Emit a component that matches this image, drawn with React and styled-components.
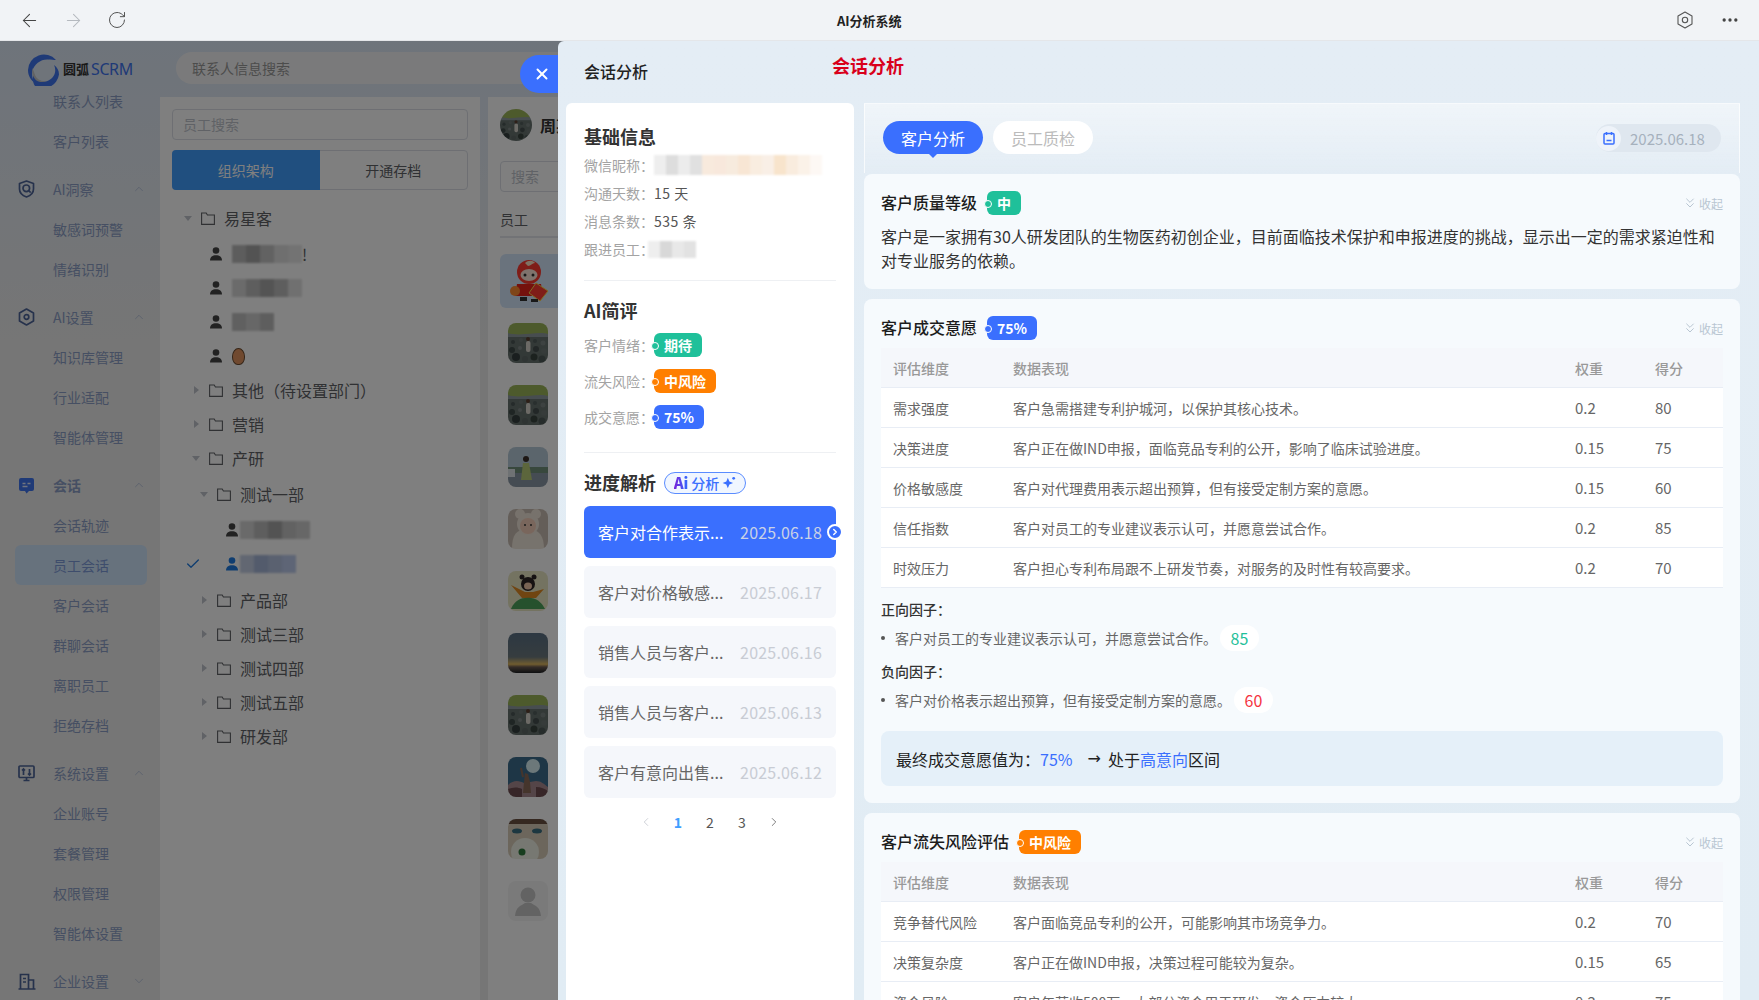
import React from 'react';
import styled, { createGlobalStyle } from 'styled-components';
import { ArrowLeft, ArrowRight, RotateCw, MoreHorizontal, X, ChevronUp, ChevronDown, ChevronLeft, ChevronRight, ChevronsDown, Check } from 'lucide-react';

const GlobalStyle = createGlobalStyle`
    html, body { margin: 0; padding: 0; height: 100%; overflow: hidden; }
    body { font-family: "Noto Sans CJK SC", "Noto Sans", sans-serif; font-size: 14px; color: #333; }
    * { box-sizing: border-box; }
`;

const GREEN = '#1fc09a';
const ORANGE = '#ff7f00';
const BLUE = '#3a6ffe';

const navGroups = [
    { items: ['联系人列表', '客户列表'] },
    { title: 'AI洞察', icon: 'insight', items: ['敏感词预警', '情绪识别'] },
    { title: 'AI设置', icon: 'setting', items: ['知识库管理', '行业适配', '智能体管理'] },
    { title: '会话', icon: 'chat', strong: true, items: ['会话轨迹', '员工会话', '客户会话', '群聊会话', '离职员工', '拒绝存档'] },
    { title: '系统设置', icon: 'monitor', items: ['企业账号', '套餐管理', '权限管理', '智能体设置'] },
    { title: '企业设置', icon: 'building', closed: true, items: [] },
];

const treeRows = [
    { type: 'folder', pad: 23, open: true, label: '易星客' },
    { type: 'person', pad: 50, mt: 2, label: 'J', tail: '!', cells: ['#bbb', '#a6a6a6', '#c4c4c4', '#dedede', '#e6e6e6'] },
    { type: 'person', pad: 50, cells: ['#d6d6d6', '#bdbdbd', '#a8a8a8', '#bdbdbd', '#e0e0e0'] },
    { type: 'person', pad: 50, cells: ['#c0c0c0', '#cfcfcf', '#bdbdbd'] },
    { type: 'person', pad: 50, nut: true },
    { type: 'folder', pad: 31, label: '其他（待设置部门）' },
    { type: 'folder', pad: 31, label: '营销' },
    { type: 'folder', pad: 31, open: true, label: '产研' },
    { type: 'folder', pad: 39, mt: 2, open: true, label: '测试一部' },
    { type: 'person', pad: 66, mt: 2, tight: true, cells: ['#d4d4d4', '#bdbdbd', '#a6a6a6', '#c4c4c4', '#cfcfcf'] },
    { type: 'person', pad: 25, selected: true, tight: true, cells: ['#c4cfe4', '#a6b6d8', '#b4c2e0', '#bccaec'] },
    { type: 'folder', pad: 39, mt: 2, label: '产品部' },
    { type: 'folder', pad: 39, label: '测试三部' },
    { type: 'folder', pad: 39, label: '测试四部' },
    { type: 'folder', pad: 39, label: '测试五部' },
    { type: 'folder', pad: 39, label: '研发部' },
];

const avatars = ['rocks', 'rocks', 'lake', 'baby', 'toon', 'dusk', 'rocks', 'sun', 'eyes', 'blank'];

const rockDots = [
    [5, 19, 2, '#4a5654'], [13, 17, 2, '#707a78'], [27, 18, 2, '#525e5c'], [35, 20, 2.5, '#7a8482'],
    [4, 27, 3, '#3e4a48'], [12, 25, 2, '#808a88'], [28, 26, 3, '#454f4e'], [36, 28, 3, '#6c7674'],
    [8, 34, 4, '#343f3e'], [17, 36, 3, '#5e6866'], [26, 34, 3.5, '#39443f'], [34, 36, 3.5, '#4c5856'],
];

const progress = [
    { text: '客户对合作表示...', date: '2025.06.18', active: true },
    { text: '客户对价格敏感...', date: '2025.06.17' },
    { text: '销售人员与客户...', date: '2025.06.16' },
    { text: '销售人员与客户...', date: '2025.06.13' },
    { text: '客户有意向出售...', date: '2025.06.12' },
];

const intentRows = [
    ['需求强度', '客户急需搭建专利护城河，以保护其核心技术。', '0.2', '80'],
    ['决策进度', '客户正在做IND申报，面临竞品专利的公开，影响了临床试验进度。', '0.15', '75'],
    ['价格敏感度', '客户对代理费用表示超出预算，但有接受定制方案的意愿。', '0.15', '60'],
    ['信任指数', '客户对员工的专业建议表示认可，并愿意尝试合作。', '0.2', '85'],
    ['时效压力', '客户担心专利布局跟不上研发节奏，对服务的及时性有较高要求。', '0.2', '70'],
];

const riskRows = [
    ['竞争替代风险', '客户面临竞品专利的公开，可能影响其市场竞争力。', '0.2', '70'],
    ['决策复杂度', '客户正在做IND申报，决策过程可能较为复杂。', '0.15', '65'],
    ['资金风险', '客户年营收500万，大部分资金用于研发，资金压力较大。', '0.2', '75'],
];

function NavIcon({ name }) {
    if (name === 'insight') return (
        <svg width="17" height="18" viewBox="0 0 17 18" fill="none" stroke="#4d6498" strokeWidth="1.7">
            <path d="M8.5 1 15.500 3.500V9c0 4-3 6.700-7 8-4-1.300-7-4-7-8V3.500Z" strokeLinejoin="round" />
            <circle cx="8.300" cy="8.300" r="3.300" />
            <path d="m10.700 10.700 2 2" />
        </svg>
    );
    if (name === 'setting') return (
        <svg width="17" height="18" viewBox="0 0 17 18" fill="none" stroke="#4d6498" strokeWidth="1.700">
            <path d="M8.500 1 15.500 5V13L8.500 17 1.500 13V5Z" strokeLinejoin="round" />
            <circle cx="8.500" cy="9" r="2.300" />
        </svg>
    );
    if (name === 'chat') return (
        <svg width="17" height="17" viewBox="0 0 17 17">
            <path d="M3 1h11a2 2 0 0 1 2 2v9a2 2 0 0 1-2 2h-3l-2.500 2.500L7 14H3a2 2 0 0 1-2-2V3a2 2 0 0 1 2-2Z" fill="#3f74ee" />
            <path d="M4.500 6.500h3M9.500 6.500h3M4.500 9.500h5" stroke="#dfe8ff" strokeWidth="1.400" />
        </svg>
    );
    if (name === 'monitor') return (
        <svg width="17" height="17" viewBox="0 0 17 17" fill="none" stroke="#4d6498" strokeWidth="1.700">
            <rect x="1" y="1" width="15" height="11.500" rx="1" />
            <path d="M5.500 15.500h6M8.500 12.500v3M5.500 4v6M11.500 4v6M4 5.500l1.500-1.500L7 5.500M10 8.500l1.500 1.500L13 8.500" />
        </svg>
    );
    return (
        <svg width="18" height="17" viewBox="0 0 18 17" fill="none" stroke="#4d6498" strokeWidth="1.700">
            <path d="M2.500 15.500V1.500h8v14M10.500 7h5v8.500M.5 16h17M5 5.500h3M5 9h3" />
        </svg>
    );
}

function Logo() {
    return (
        <svg width="32" height="33" viewBox="0 0 32 33">
            <path d="M29 7A16 16 0 0 0 1 17c0 6 3 10.500 7 13-2.500-3-3.500-8-2.500-12C7 11 14 6 21 6.500c3 .2 6 .5 8 .5Z" fill="#3f74ee" />
            <path d="M6 21c2 5 7 8 12 7.500 5-.5 9-4.500 10-9 .5-3 .2-5-1-7.500 3 2 5 5.500 5 9.500a16 16 0 0 1-24 11.500C5.500 30 6 26 6 21Z" fill="#3f74ee" />
            <path d="M5.500 15c-1 6 1 10 4 12.500 3.500 2 7 2 10 .5-6 .5-10-2-11.500-6-.8-2.300-1.500-4.500-2.500-7Z" fill="#c6c6c6" />
        </svg>
    );
}

function Folder() {
    return (
        <svg width="14" height="13" viewBox="0 0 14 13" fill="none" stroke="#606266" strokeWidth="1.100">
            <path d="M.6 1h4.600l1.200 2h7v9.400H.6Z" />
        </svg>
    );
}

function Person({ color }) {
    return (
        <svg width="12" height="14" viewBox="0 0 12 14" fill={color}>
            <circle cx="6" cy="3.500" r="3.300" />
            <path d="M0 13.500c0-3.500 2.500-5.300 6-5.300s6 1.800 6 5.300Z" />
        </svg>
    );
}

function Mosaic({ cells, size = 14, height = 18 }) {
    return (
        <svg width={cells.length * size} height={height} style={{ filter: 'blur(1px)' }}>
            {cells.map((c, i) => <rect key={i} x={i * size} y="0" width={size} height={height} fill={c} />)}
        </svg>
    );
}

function Mascot() {
    return (
        <svg width="44" height="44" viewBox="0 0 44 44">
            <circle cx="21" cy="13" r="12" fill="#ff3b30" />
            <path d="M17 4c3-3 8-3 10 0-3 0-4 3-7 3Z" fill="#ffe6c8" />
            <ellipse cx="21" cy="16" rx="8.500" ry="6" fill="#ffe6d8" />
            <circle cx="17" cy="16" r="1.500" fill="#333" />
            <circle cx="25" cy="16" r="1.500" fill="#333" />
            <path d="M9 25h24l2 12H7Z" fill="#e8231a" />
            <path d="M28 24l12 8-8 10-11-8Z" fill="#ff3b30" stroke="#ffd84a" strokeWidth="1" />
            <circle cx="7" cy="32" r="5" fill="#ff8a30" />
            <rect x="12" y="38" width="7" height="4" fill="#333" />
            <rect x="23" y="40" width="7" height="3" fill="#333" />
        </svg>
    );
}

function Scene({ kind }) {
    if (kind === 'rocks') return (
        <svg viewBox="0 0 40 40" width="40" height="40">
            <rect width="40" height="40" fill="#8f9a9e" />
            <path d="M0 0h40v11C30 8 12 14 0 10Z" fill="#9bb458" />
            <path d="M0 14h40v26H0Z" fill="#67726f" />
            {rockDots.map(([x, y, r, c], i) => <circle key={i} cx={x} cy={y} r={r} fill={c} />)}
            <rect x="18" y="18" width="4.500" height="11" rx="2" fill="#d8d4cc" />
            <circle cx="20" cy="16" r="2" fill="#5a3f30" />
        </svg>
    );
    if (kind === 'lake') return (
        <svg viewBox="0 0 40 40" width="40" height="40">
            <rect width="40" height="40" fill="#b7cbd8" />
            <rect y="20" width="40" height="6" fill="#70907a" />
            <rect y="26" width="40" height="14" fill="#8a98a6" />
            <rect x="0" y="22" width="7" height="8" fill="#dfe4e8" />
            <path d="M15 16h6l3 17H13Z" fill="#b9cc78" />
            <circle cx="18" cy="12" r="3" fill="#3a2e28" />
        </svg>
    );
    if (kind === 'baby') return (
        <svg viewBox="0 0 40 40" width="40" height="40">
            <rect width="40" height="40" fill="#c9bdb2" />
            <circle cx="12" cy="5" r="5" fill="#efe4d8" />
            <circle cx="28" cy="5" r="5" fill="#efe4d8" />
            <path d="M4 40c0-14 4-20 16-20s16 8 16 20Z" fill="#efe6da" />
            <circle cx="20" cy="15" r="11" fill="#efe4d8" />
            <circle cx="20" cy="17" r="8" fill="#f3cdb8" />
            <circle cx="17" cy="16" r="1" fill="#333" />
            <circle cx="23" cy="16" r="1" fill="#333" />
        </svg>
    );
    if (kind === 'toon') return (
        <svg viewBox="0 0 40 40" width="40" height="40">
            <rect width="40" height="40" fill="#e9e6c3" />
            <path d="M3 14l14 7h8l11-3-8 9H14Z" fill="#e08a22" />
            <path d="M3 38c4-10 12-12 20-11s12 7 14 11Z" fill="#4ca35a" />
            <circle cx="20" cy="13" r="7" fill="#2c2424" />
            <circle cx="14" cy="6" r="2.500" fill="#2c2424" />
            <circle cx="26" cy="6" r="2.500" fill="#2c2424" />
            <ellipse cx="20" cy="15" rx="4" ry="3.500" fill="#f2c9a8" />
        </svg>
    );
    if (kind === 'dusk') return (
        <svg viewBox="0 0 40 40" width="40" height="40">
            <defs>
                <linearGradient id="duskSky" x1="0" y1="0" x2="0" y2="1">
                    <stop offset="0" stopColor="#5a7084" />
                    <stop offset=".6" stopColor="#6d7a7f" />
                    <stop offset=".78" stopColor="#e0b860" />
                    <stop offset=".85" stopColor="#6b5a50" />
                    <stop offset="1" stopColor="#1c2024" />
                </linearGradient>
            </defs>
            <rect width="40" height="40" fill="url(#duskSky)" />
        </svg>
    );
    if (kind === 'sun') return (
        <svg viewBox="0 0 40 40" width="40" height="40">
            <rect width="40" height="40" fill="#3d6d8c" />
            <circle cx="25" cy="9" r="7" fill="#d8f0f4" />
            <path d="M0 28c6-6 12-4 16-2l12-2c5 0 8 3 12 6v10H0Z" fill="#a88a90" />
            <path d="M0 32c5-2 10-2 14 0v8H0ZM28 30c5 0 9 2 12 4v6H28Z" fill="#6e4c50" />
            <path d="M17 16l3 1 2 8 1 11h-8l1-11Z" fill="#8a6a58" />
            <path d="M15 20l-2-9" stroke="#8a6a58" strokeWidth="2" />
        </svg>
    );
    if (kind === 'eyes') return (
        <svg viewBox="0 0 40 40" width="40" height="40">
            <rect width="40" height="40" fill="#d8cdb8" />
            <path d="M0 0h40v5H0Z" fill="#6a5040" />
            <ellipse cx="9" cy="12" rx="5" ry="2.500" fill="#3a6e80" />
            <ellipse cx="29" cy="12" rx="5" ry="2.500" fill="#3a6e80" />
            <circle cx="17" cy="33" r="14" fill="#eef0e4" />
            <circle cx="14" cy="33" r="3.500" fill="#2e7a3c" />
        </svg>
    );
    return (
        <svg viewBox="0 0 40 40" width="40" height="40">
            <rect width="40" height="40" fill="#f5f5f5" />
            <circle cx="20" cy="14" r="7.500" fill="#c6c6c6" />
            <path d="M7 35c1-10 6-10 10-13h6c4 3 9 3 10 13Z" fill="#c6c6c6" />
        </svg>
    );
}

function DataTable({ rows }) {
    return (
        <Table>
            <HeadRow>
                <span>评估维度</span><span>数据表现</span><span>权重</span><span>得分</span>
            </HeadRow>
            {rows.map((r) => (
                <BodyRow key={r[0]}>
                    {r.map((c, i) => <span key={i}>{c}</span>)}
                </BodyRow>
            ))}
        </Table>
    );
}

function CardHead({ title, color, tag }) {
    return (
        <CardTop>
            <CardTitle>{title}</CardTitle>
            <Tag $color={color}>{tag}</Tag>
            <Collapse><ChevronsDown size={16} strokeWidth={1.5} />收起</Collapse>
        </CardTop>
    );
}

export default function App() {
    return (
        <Page>
            <GlobalStyle />
            <TopBar>
                <NavButtons>
                    <ArrowLeft size={21} strokeWidth={1.2} color="#444" />
                    <ArrowRight size={21} strokeWidth={1.2} color="#b5b9bf" />
                    <RotateCw size={20} strokeWidth={1.2} color="#555" />
                </NavButtons>
                <AppTitle>AI分析系统</AppTitle>
                <TopActions>
                    <svg width="18" height="18" viewBox="0 0 18 18" fill="none" stroke="#555" strokeWidth="1.100">
                        <path d="M9 1 16 5v8l-7 4-7-4V5Z" strokeLinejoin="round" />
                        <circle cx="9" cy="9" r="2.700" />
                    </svg>
                    <MoreHorizontal size={20} strokeWidth={2} color="#444" />
                </TopActions>
            </TopBar>
            <Workspace>
                <Sidebar>
                    <LogoRow>
                        <Logo />
                        <LogoCn>圆弧</LogoCn>
                        <LogoEn>SCRM</LogoEn>
                    </LogoRow>
                    {navGroups.map((g, idx) => (
                        <NavGroup key={idx}>
                            {g.title && (
                                <NavHead>
                                    <NavIconBox><NavIcon name={g.icon} /></NavIconBox>
                                    <NavHeadText $strong={g.strong}>{g.title}</NavHeadText>
                                    {g.closed ? <ChevronDown size={14} strokeWidth={1.2} /> : <ChevronUp size={14} strokeWidth={1.2} />}
                                </NavHead>
                            )}
                            {g.items.map((item) => (
                                <NavItem key={item} $active={item === '员工会话'}>{item}</NavItem>
                            ))}
                        </NavGroup>
                    ))}
                </Sidebar>
                <MainArea>
                    <HeaderRow>
                        <SearchPill>联系人信息搜索<SearchDot /></SearchPill>
                    </HeaderRow>
                    <Panels>
                        <TreePanel>
                            <TextInput $w="296px">员工搜索</TextInput>
                            <SegTabs>
                                <SegTab $active>组织架构</SegTab>
                                <SegTab>开通存档</SegTab>
                            </SegTabs>
                            <Tree>
                                {treeRows.map((r, i) => (
                                    <TreeRow key={i} $pad={r.pad} $mt={r.mt}>
                                        {r.type === 'folder' ? (
                                            <>
                                                <Caret $open={r.open} />
                                                <Folder />
                                                <TreeLabel>{r.label}</TreeLabel>
                                            </>
                                        ) : (
                                            <>
                                                {r.selected && <CheckSlot><Check size={16} strokeWidth={2} color="#1f7be0" /></CheckSlot>}
                                                <Person color={r.selected ? '#1f7be0' : '#444'} />
                                                <PersonName $tight={r.tight}>
                                                    {r.nut ? <Nut /> : <Mosaic cells={r.cells} size={14} height={18} />}
                                                    {r.tail}
                                                </PersonName>
                                            </>
                                        )}
                                    </TreeRow>
                                ))}
                            </Tree>
                        </TreePanel>
                        <StaffPanel>
                            <StaffHead>
                                <RoundPhoto><Scene kind="rocks" /></RoundPhoto>
                                <StaffName>周某某</StaffName>
                            </StaffHead>
                            <TextInput $w="200px">搜索</TextInput>
                            <StaffLabel>员工</StaffLabel>
                            <StaffRow $active><Mascot /></StaffRow>
                            {avatars.map((a, i) => (
                                <StaffRow key={i}><Photo><Scene kind={a} /></Photo></StaffRow>
                            ))}
                        </StaffPanel>
                    </Panels>
                </MainArea>
                <Mask />
                <CloseTab><X size={18} strokeWidth={2.6} color="#fff" /></CloseTab>
                <Drawer>
                    <DrawerHead>
                        <DrawerTitle>会话分析</DrawerTitle>
                        <RedTitle>会话分析</RedTitle>
                    </DrawerHead>
                    <DrawerBody>
                        <InfoCard>
                            <SectionTitle>基础信息</SectionTitle>
                            <InfoRow>
                                <InfoLabel>微信昵称：</InfoLabel>
                                <Mosaic size={12} height={20} cells={['#eee', '#ddd', '#ececec', '#e0e0e0', '#f8eadd', '#f8e8dc', '#f7ebde', '#f8e6d4', '#f9ede0', '#f9efe6', '#f8e4cc', '#f9ecde', '#fbf2e8', '#fdf8f4', '#fff']} />
                            </InfoRow>
                            <InfoRow><InfoLabel>沟通天数：</InfoLabel><InfoValue>15 天</InfoValue></InfoRow>
                            <InfoRow><InfoLabel>消息条数：</InfoLabel><InfoValue>535 条</InfoValue></InfoRow>
                            <InfoRow>
                                <InfoLabel>跟进员工：</InfoLabel>
                                <NegativeSlot><Mosaic size={12} height={17} cells={['#eee', '#d8d8d8', '#e8e8e8', '#e2e2e2']} /></NegativeSlot>
                            </InfoRow>
                            <Divider />
                            <SectionTitle>AI简评</SectionTitle>
                            <TagList>
                                <TagRow><InfoLabel>客户情绪：</InfoLabel><Tag $color={GREEN}>期待</Tag></TagRow>
                                <TagRow><InfoLabel>流失风险：</InfoLabel><Tag $color={ORANGE}>中风险</Tag></TagRow>
                                <TagRow><InfoLabel>成交意愿：</InfoLabel><Tag $color={BLUE}>75%</Tag></TagRow>
                            </TagList>
                            <Divider />
                            <ProgressHead>
                                <SectionTitle>进度解析</SectionTitle>
                                <AiBadge>
                                    <AiMark>Ai</AiMark>分析
                                    <svg width="14" height="14" viewBox="0 0 12 12" fill={BLUE}>
                                        <path d="M5 1.500 6.300 4.700 9.500 6 6.300 7.300 5 10.500 3.700 7.300.5 6 3.700 4.700Z" />
                                        <circle cx="10" cy="2" r="1.200" />
                                    </svg>
                                </AiBadge>
                            </ProgressHead>
                            <ProgressList>
                                {progress.map((p) => (
                                    <ProgressItem key={p.date} $active={p.active}>
                                        <ProgressText>{p.text}</ProgressText>
                                        <ProgressDate $active={p.active}>{p.date}</ProgressDate>
                                        {p.active && <ActiveArrow><ChevronRight size={10} strokeWidth={3.5} color="#fff" /></ActiveArrow>}
                                    </ProgressItem>
                                ))}
                            </ProgressList>
                            <Pager>
                                <ChevronLeft size={14} strokeWidth={1.3} color="#c0c4cc" />
                                <PageNum $active>1</PageNum>
                                <PageNum>2</PageNum>
                                <PageNum>3</PageNum>
                                <ChevronRight size={14} strokeWidth={1.3} color="#555" />
                            </Pager>
                        </InfoCard>
                        <ReportColumn>
                            <TabPanel>
                                <PillTab $active>客户分析</PillTab>
                                <PillTab>员工质检</PillTab>
                                <DatePill>
                                    <DateIcon>
                                        <svg width="14" height="14" viewBox="0 0 14 14" fill="none" stroke={BLUE} strokeWidth="1.500">
                                            <rect x="2" y="2.500" width="10" height="10.500" rx="1" />
                                            <path d="M4.500 1v3M9.500 1v3M4.500 9.500h5" />
                                        </svg>
                                    </DateIcon>
                                    2025.06.18
                                </DatePill>
                            </TabPanel>
                            <CardStack>
                                <Card>
                                    <CardHead title="客户质量等级" color={GREEN} tag="中" />
                                    <Summary>客户是一家拥有30人研发团队的生物医药初创企业，目前面临技术保护和申报进度的挑战，显示出一定的需求紧迫性和对专业服务的依赖。</Summary>
                                </Card>
                                <Card>
                                    <CardHead title="客户成交意愿" color={BLUE} tag="75%" />
                                    <DataTable rows={intentRows} />
                                    <FactorTitle>正向因子：</FactorTitle>
                                    <FactorRow>
                                        <Bullet />客户对员工的专业建议表示认可，并愿意尝试合作。
                                        <Score $color={GREEN}>85</Score>
                                    </FactorRow>
                                    <FactorTitle $second>负向因子：</FactorTitle>
                                    <FactorRow>
                                        <Bullet />客户对价格表示超出预算，但有接受定制方案的意愿。
                                        <Score $color="#f5333f">60</Score>
                                    </FactorRow>
                                    <FinalBox>
                                        最终成交意愿值为：<Hl>75%</Hl><Arrow>→</Arrow>处于<Hl>高意向</Hl>区间
                                    </FinalBox>
                                </Card>
                                <Card>
                                    <CardHead title="客户流失风险评估" color={ORANGE} tag="中风险" />
                                    <DataTable rows={riskRows} />
                                </Card>
                            </CardStack>
                        </ReportColumn>
                    </DrawerBody>
                </Drawer>
            </Workspace>
        </Page>
    );
}

const Page = styled.div`
    height: 100vh;
    display: flex;
    flex-direction: column;
    overflow: hidden;
`;

const TopBar = styled.div`
    height: 41px;
    flex-shrink: 0;
    background: #f1f3f6;
    border-bottom: 1px solid #e4e6e9;
    display: grid;
    grid-template-columns: 818px auto 1fr;
    align-items: center;
    padding: 0 19px 0 19px;
`;

const NavButtons = styled.div`
    display: flex;
    align-items: center;
    gap: 23px;
`;

const AppTitle = styled.div`
    font-size: 13px;
    font-weight: 700;
    color: #222;
`;

const TopActions = styled.div`
    display: flex;
    justify-content: flex-end;
    align-items: center;
    gap: 26px;
`;

const Workspace = styled.div`
    position: relative;
    flex: 1;
    min-height: 0;
    display: flex;
    overflow: hidden;
    background: linear-gradient(180deg, #dde8f6 0, #ececec 300px);
`;

const Sidebar = styled.div`
    width: 160px;
    flex-shrink: 0;
`;

const LogoRow = styled.div`
    height: 40px;
    padding: 12px 0 0 27px;
    display: flex;
    align-items: flex-start;
`;

const LogoCn = styled.span`
    margin-left: 4px;
    line-height: 32px;
    font-size: 13px;
    font-weight: 700;
    color: #333;
`;

const LogoEn = styled.span`
    margin-left: 2px;
    line-height: 32px;
    font-size: 16px;
    letter-spacing: -0.4px;
    color: #3f74ee;
    font-family: "Noto Sans", sans-serif;
`;

const NavGroup = styled.div`
    margin-bottom: 8px;
`;

const NavHead = styled.div`
    height: 40px;
    display: flex;
    align-items: center;
    padding: 0 14px 0 18px;
    color: #8d9fc6;
    svg:last-child { color: #a8b8d4; }
`;

const NavIconBox = styled.span`
    width: 35px;
    display: flex;
    align-items: center;
`;

const NavHeadText = styled.span`
    flex: 1;
    font-size: 14px;
    font-weight: ${(p) => (p.$strong ? 700 : 400)};
`;

const NavItem = styled.div`
    height: 40px;
    line-height: 40px;
    margin: 0 13px 0 15px;
    padding-left: 38px;
    border-radius: 6px;
    font-size: 14px;
    color: ${(p) => (p.$active ? '#7d9ad8' : '#8d9fc6')};
    background: ${(p) => (p.$active ? '#cfe4fb' : 'transparent')};
`;

const MainArea = styled.div`
    flex: 1;
    min-width: 0;
    display: flex;
    flex-direction: column;
`;

const HeaderRow = styled.div`
    height: 56px;
    flex-shrink: 0;
    padding: 11px 0 0 16px;
`;

const SearchPill = styled.div`
    width: 400px;
    height: 32px;
    border-radius: 16px;
    padding: 0 16px;
    background: #f5f5f6;
    color: #999;
    font-size: 14px;
    display: flex;
    align-items: center;
    justify-content: space-between;
`;

const SearchDot = styled.span`
    width: 12px;
    height: 12px;
    margin-right: 10px;
    border-radius: 50%;
    border: 1.5px solid #bbb;
`;

const Panels = styled.div`
    flex: 1;
    display: flex;
    gap: 8px;
`;

const TreePanel = styled.div`
    width: 320px;
    flex-shrink: 0;
    background: #fff;
    padding: 12px 12px 0;
`;

const TextInput = styled.div`
    width: ${(p) => p.$w};
    height: 31px;
    line-height: 29px;
    padding-left: 10px;
    border: 1px solid #dcdfe6;
    border-radius: 4px;
    font-size: 14px;
    color: #c0c4cc;
`;

const SegTabs = styled.div`
    margin-top: 10px;
    width: 296px;
    height: 40px;
    display: flex;
    border: 1px solid #dcdfe6;
    border-radius: 4px;
`;

const SegTab = styled.div`
    flex: 1;
    margin: ${(p) => (p.$active ? '-1px 0 -1px -1px' : 0)};
    border-radius: ${(p) => (p.$active ? '4px 0 0 4px' : 0)};
    background: ${(p) => (p.$active ? '#409eff' : 'transparent')};
    color: ${(p) => (p.$active ? '#fff' : '#606266')};
    font-size: 14px;
    display: flex;
    align-items: center;
    justify-content: center;
`;

const Tree = styled.div`
    margin: 11px -12px 0;
`;

const TreeRow = styled.div`
    height: 34px;
    margin-top: ${(p) => p.$mt || 0}px;
    padding-left: ${(p) => p.$pad}px;
    display: flex;
    align-items: center;
`;

const Caret = styled.span`
    width: 10px;
    margin-right: 8px;
    height: 0;
    display: flex;
    justify-content: center;
    &::before {
        content: "";
        border-style: solid;
        border-color: transparent;
        ${(p) => (p.$open
        ? 'border-width: 5px 4px 0; border-top-color: #c0c4cc; margin-top: -2px;'
        : 'border-width: 4px 0 4px 5px; border-left-color: #c0c4cc; margin-top: -4px;')}
        height: 0;
    }
`;

const TreeLabel = styled.span`
    margin-left: 9px;
    font-size: 16px;
    color: #606266;
`;

const CheckSlot = styled.span`
    width: 41px;
    display: flex;
    align-items: center;
`;

const PersonName = styled.span`
    margin-left: ${(p) => (p.$tight ? 2 : 10)}px;
    display: flex;
    align-items: center;
    font-size: 16px;
    color: #606266;
`;

const Nut = styled.span`
    width: 13px;
    height: 17px;
    border-radius: 50% 50% 45% 45%;
    background: #e0935e;
    border: 1.5px solid #6a4a30;
`;

const StaffPanel = styled.div`
    flex: 1;
    background: #fff;
    padding: 12px;
`;

const StaffHead = styled.div`
    height: 32px;
    margin-bottom: 20px;
    display: flex;
    align-items: center;
    gap: 8px;
`;

const RoundPhoto = styled.div`
    width: 32px;
    height: 32px;
    border-radius: 50%;
    overflow: hidden;
    svg { width: 32px; height: 32px; display: block; filter: blur(0.5px); }
`;

const StaffName = styled.span`
    font-size: 16px;
    font-weight: 700;
    color: #333;
`;

const StaffLabel = styled.div`
    margin-top: 16px;
    height: 30px;
    font-size: 14px;
    color: #606266;
    border-bottom: 2px solid #e4e7ed;
    width: 200px;
    line-height: 22px;
    margin-bottom: 16px;
`;

const StaffRow = styled.div`
    height: 54px;
    margin-bottom: 8px;
    padding-left: 8px;
    width: 200px;
    border-radius: 6px;
    display: flex;
    align-items: center;
    background: ${(p) => (p.$active ? '#d4e6fb' : 'transparent')};
`;

const Photo = styled.div`
    width: 40px;
    height: 40px;
    border-radius: 8px;
    overflow: hidden;
    svg { display: block; filter: blur(0.5px); }
`;

const Mask = styled.div`
    position: absolute;
    inset: 0;
    background: rgba(0, 0, 0, 0.5);
`;

const CloseTab = styled.div`
    position: absolute;
    top: 14px;
    left: 520px;
    width: 40px;
    height: 38px;
    padding-left: 4px;
    border-radius: 19px 0 0 19px;
    background: ${BLUE};
    display: flex;
    align-items: center;
    justify-content: center;
`;

const Drawer = styled.div`
    position: absolute;
    top: 0;
    left: 558px;
    right: 0;
    bottom: 0;
    border-top-left-radius: 6px;
    background: linear-gradient(180deg, #e4edf5, #e1ecf4);
    padding: 0 19px 0 8px;
    display: flex;
    flex-direction: column;
`;

const DrawerHead = styled.div`
    height: 62px;
    flex-shrink: 0;
    padding-left: 18px;
    display: flex;
    align-items: flex-start;
    gap: 184px;
`;

const DrawerTitle = styled.div`
    padding-top: 18px;
    font-size: 16px;
    line-height: 24px;
    font-weight: 500;
    color: #222;
`;

const RedTitle = styled.div`
    padding-top: 11px;
    font-size: 18px;
    line-height: 26px;
    font-weight: 700;
    color: #d9001b;
`;

const DrawerBody = styled.div`
    flex: 1;
    min-height: 0;
    display: flex;
    gap: 10px;
`;

const InfoCard = styled.div`
    width: 288px;
    flex-shrink: 0;
    background: #fff;
    border-radius: 6px 6px 0 0;
    padding: 19px 18px 0;
`;

const SectionTitle = styled.div`
    font-size: 18px;
    line-height: 28px;
    padding-bottom: 1px;
    font-weight: 700;
    color: #333;
`;

const InfoRow = styled.div`
    height: 28px;
    display: flex;
    align-items: center;
`;

const InfoLabel = styled.span`
    width: 70px;
    flex-shrink: 0;
    font-size: 14px;
    color: #a3a3a3;
`;

const InfoValue = styled.span`
    font-size: 14px;
    letter-spacing: 0.5px;
    color: #555;
`;

const NegativeSlot = styled.span`
    display: flex;
    margin-left: -6px;
`;

const Divider = styled.div`
    height: 1px;
    margin: 17px 0 15px;
    background: #eef0f3;
`;

const TagList = styled.div`
    margin-top: 2px;
`;

const TagRow = styled.div`
    height: 36px;
    display: flex;
    align-items: center;
`;

const Tag = styled.span`
    position: relative;
    height: 24px;
    padding: 0 10px;
    border-radius: 6px;
    background: ${(p) => p.$color};
    color: #fff;
    font-size: 14px;
    font-weight: 700;
    line-height: 24px;
    flex-shrink: 0;
    &::before {
        content: "";
        position: absolute;
        left: -3px;
        top: 9px;
        width: 6px;
        height: 6px;
        border-radius: 50%;
        border: 1px solid #fff;
        background: ${(p) => p.$color};
    }
`;

const ProgressHead = styled.div`
    display: flex;
    align-items: center;
    gap: 8px;
`;

const AiBadge = styled.span`
    width: 82px;
    height: 22px;
    border: 1px solid #5a8cff;
    border-radius: 11px;
    background: #f0f6ff;
    color: ${BLUE};
    font-size: 14px;
    font-weight: 500;
    display: flex;
    align-items: center;
    justify-content: center;
    gap: 3px;
`;

const AiMark = styled.span`
    font-weight: 800;
    font-size: 15px;
    background: linear-gradient(90deg, #7a22d8, #2f6bff);
    -webkit-background-clip: text;
    background-clip: text;
    color: transparent;
`;

const ProgressList = styled.div`
    margin-top: 9px;
    display: flex;
    flex-direction: column;
    gap: 8px;
`;

const ProgressItem = styled.div`
    position: relative;
    height: 52px;
    padding: 0 14px;
    border-radius: 6px;
    background: ${(p) => (p.$active ? BLUE : '#f5f7fb')};
    color: ${(p) => (p.$active ? '#fff' : '#666')};
    display: flex;
    align-items: center;
    justify-content: space-between;
`;

const ProgressText = styled.span`
    font-size: 16px;
    white-space: nowrap;
`;

const ProgressDate = styled.span`
    font-size: 16px;
    letter-spacing: 0.2px;
    color: ${(p) => (p.$active ? '#c9d2e6' : '#c8ccd4')};
`;

const ActiveArrow = styled.span`
    position: absolute;
    right: -7px;
    top: 18px;
    width: 16px;
    height: 16px;
    border-radius: 50%;
    border: 2px solid #fff;
    background: ${BLUE};
    display: flex;
    align-items: center;
    justify-content: center;
`;

const Pager = styled.div`
    margin-top: 14px;
    height: 20px;
    display: flex;
    align-items: center;
    justify-content: center;
    gap: 18px;
`;

const PageNum = styled.span`
    width: 14px;
    text-align: center;
    font-size: 14px;
    font-weight: ${(p) => (p.$active ? 700 : 400)};
    color: ${(p) => (p.$active ? '#409eff' : '#555')};
`;

const ReportColumn = styled.div`
    flex: 1;
    min-width: 0;
`;

const TabPanel = styled.div`
    height: 70px;
    margin-bottom: 1px;
    padding: 17px 18px 0;
    border: 1px solid rgba(255, 255, 255, 0.7);
    border-bottom: none;
    background: linear-gradient(180deg, rgba(255, 255, 255, 0.45), rgba(255, 255, 255, 0));
    display: flex;
    align-items: flex-start;
    gap: 10px;
`;

const PillTab = styled.div`
    position: relative;
    width: 100px;
    height: 33px;
    border-radius: 17px;
    background: ${(p) => (p.$active ? BLUE : '#fff')};
    color: ${(p) => (p.$active ? '#fff' : '#bbb')};
    font-size: 16px;
    display: flex;
    align-items: center;
    justify-content: center;
    ${(p) => p.$active && `&::after {
        content: "";
        position: absolute;
        bottom: -4px;
        left: 45px;
        border-style: solid;
        border-width: 5px 5px 0;
        border-color: ${BLUE} transparent transparent;
    }`}
`;

const DatePill = styled.div`
    margin-left: auto;
    margin-top: 3px;
    width: 125px;
    height: 28px;
    border-radius: 14px;
    background: #dfe7ef;
    color: #a6b1bd;
    font-size: 15px;
    display: flex;
    align-items: center;
    gap: 9px;
`;

const DateIcon = styled.span`
    width: 25px;
    height: 25px;
    border-radius: 50%;
    background: #eef3f9;
    display: flex;
    align-items: center;
    justify-content: center;
`;

const CardStack = styled.div`
    display: flex;
    flex-direction: column;
    gap: 10px;
`;

const Card = styled.div`
    flex-shrink: 0;
    border-radius: 8px;
    background: #f6fafd;
    padding: 17px 17px 17px;
`;

const CardTop = styled.div`
    height: 24px;
    display: flex;
    align-items: center;
    gap: 10px;
`;

const CardTitle = styled.span`
    padding-bottom: 2px;
    font-size: 16px;
    font-weight: 500;
    color: #1c1c1c;
`;

const Collapse = styled.span`
    margin-left: auto;
    font-size: 12px;
    color: #b9c6d2;
    display: flex;
    align-items: center;
    gap: 1px;
`;

const Summary = styled.p`
    margin: 9px 0 0;
    font-size: 16px;
    line-height: 24px;
    color: #333;
`;

const Table = styled.div`
    margin-top: 8px;
`;

const rowColumns = `
    display: grid;
    grid-template-columns: 120px 1fr 80px 68px;
    align-items: center;
    padding-left: 12px;
    font-size: 14px;
`;

const HeadRow = styled.div`
    ${rowColumns}
    height: 40px;
    background: #f5f7fb;
    border-bottom: 1px solid #e8edf5;
    color: #999;
    font-weight: 500;
`;

const BodyRow = styled.div`
    ${rowColumns}
    height: 40px;
    background: #fff;
    border-bottom: 1px solid #e8edf5;
    color: #666;
    span:nth-child(n + 3) { font-size: 15px; }
`;

const FactorTitle = styled.div`
    margin-top: ${(p) => (p.$second ? 9 : 9)}px;
    line-height: 24px;
    font-size: 14px;
    font-weight: 500;
    color: #333;
`;

const FactorRow = styled.div`
    margin-top: 5px;
    height: 24px;
    display: flex;
    align-items: center;
    font-size: 14px;
    color: #666;
`;

const Bullet = styled.span`
    width: 4px;
    height: 4px;
    margin-right: 10px;
    border-radius: 50%;
    background: #555;
`;

const Score = styled.span`
    width: 39px;
    height: 26px;
    margin-left: 3px;
    border-radius: 13px;
    background: #fff;
    color: ${(p) => p.$color};
    font-size: 16px;
    display: flex;
    align-items: center;
    justify-content: center;
`;

const FinalBox = styled.div`
    margin-top: 19px;
    height: 55px;
    padding-left: 15px;
    border-radius: 8px;
    background: #e5f0f9;
    color: #222;
    font-size: 16px;
    display: flex;
    align-items: center;
`;

const Hl = styled.span`
    color: ${BLUE};
`;

const Arrow = styled.span`
    margin: 0 7px 0 15px;
    font-family: "DejaVu Sans", sans-serif;
`;
